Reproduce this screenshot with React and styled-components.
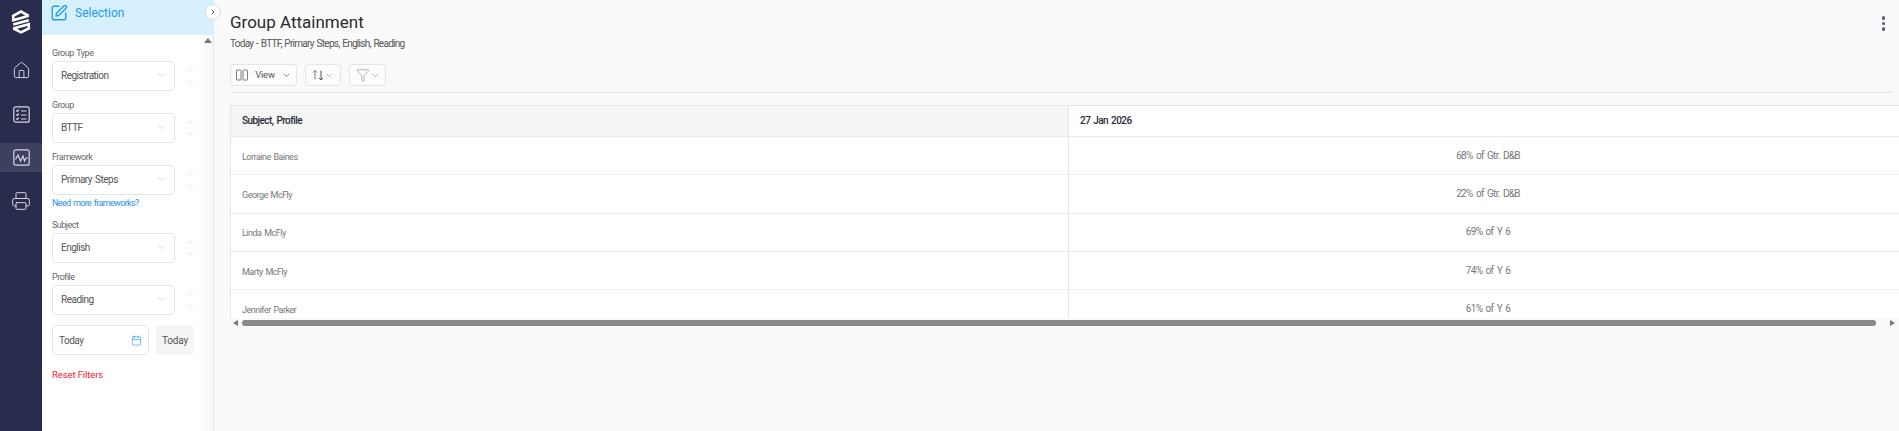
import React from 'react'
import styled, { createGlobalStyle } from 'styled-components'
import { House, Printer, SquarePen, Calendar, ChevronDown, ChevronUp, ChevronRight, Funnel } from 'lucide-react'

const Global = createGlobalStyle`
  html, body { margin: 0; height: 100%; overflow: hidden; background: #fafafa; }
  body { font-family: Roboto, "Liberation Sans", sans-serif; }
  * { box-sizing: border-box; }
`

const Page = styled.div`
  display: flex;
  width: 1899px;
  height: 431px;
  overflow: hidden;
`

const Rail = styled.nav`
  width: 42px;
  flex: none;
  background: #2a2c4e;
  color: #d5d6de;
  display: flex;
  flex-direction: column;
`

const LogoBox = styled.div`
  height: 56px;
  display: flex;
  justify-content: center;
  padding-top: 10px;
  color: #fff;
`

const NavList = styled.div`
  display: flex;
  flex-direction: column;
  gap: 14.5px;
`

const NavItem = styled.div`
  height: 29px;
  display: flex;
  align-items: center;
  justify-content: center;
  background: ${p => (p.$active ? '#3e4060' : 'transparent')};
`

const Panel = styled.aside`
  position: relative;
  width: 172px;
  flex: none;
  background: #fff;
  border-right: 1px solid #e6e6e6;
  display: flex;
  flex-direction: column;
`

const PanelHead = styled.div`
  height: 35px;
  background: #d6f0ff;
  border-bottom: 1px solid #e4eef4;
  color: #1f9cf0;
  font-size: 12px;
  display: flex;
  align-items: center;
  gap: 7px;
  padding: 0 0 8px 8px;
  margin-right: -1px;
`

const Toggle = styled.div`
  position: absolute;
  top: 4px;
  right: -8px;
  width: 16px;
  height: 16px;
  border-radius: 50%;
  background: #fff;
  border: 1px solid #d9dce2;
  display: flex;
  align-items: center;
  justify-content: center;
  color: #555;
  z-index: 2;
`

const PanelBody = styled.div`
  flex: 1;
  display: flex;
  min-height: 0;
`

const Form = styled.div`
  flex: 1;
  padding: 11px 0 0 10px;
  display: flex;
  flex-direction: column;
`

const ScrollTrack = styled.div`
  width: 10px;
  background: #fafafa;
  display: flex;
  justify-content: center;
  padding-top: 3px;
`

const ArrowUp = styled.div`
  width: 0;
  height: 0;
  border-left: 4px solid transparent;
  border-right: 4px solid transparent;
  border-bottom: 5px solid #777;
`

const Field = styled.div`
  margin-bottom: 7px;
`

const Label = styled.div`
  font-size: 9px;
  letter-spacing: -0.5px;
  word-spacing: 1px;
  line-height: 14px;
  margin-bottom: 1px;
  color: #666;
`

const SelectRow = styled.div`
  display: flex;
  align-items: center;
  gap: 6px;
`

const SelectBox = styled.div`
  width: 123px;
  height: 30px;
  border: 1px solid #e5e5e8;
  border-radius: 4px;
  padding: 0 7px 2px 8px;
  display: flex;
  align-items: center;
  justify-content: space-between;
  font-size: 10px;
  letter-spacing: -0.5px;
  word-spacing: 1px;
  color: #555;
  background: #fff;
`

const Stepper = styled.div`
  width: 14px;
  color: #d3d6df;
  display: flex;
  flex-direction: column;
  align-items: center;
  margin-left: 1px;

  svg + svg {
    margin-top: -2px;
  }
`

const HelpLink = styled.div`
  font-size: 9px;
  letter-spacing: -0.65px;
  word-spacing: 1px;
  line-height: 15px;
  color: #1f8fe8;
  margin-top: -6px;
  margin-bottom: 7px;
`

const DateRow = styled.div`
  display: flex;
  gap: 7px;
  margin-top: 3px;
`

const DateBox = styled(SelectBox)`
  width: 97px;
  padding: 0 6px 0 6px;
  color: #555;
`

const TodayButton = styled.div`
  width: 38px;
  height: 30px;
  border-radius: 3px;
  background: #f4f5f7;
  color: #555;
  font-size: 10px;
  letter-spacing: -0.2px;
  display: flex;
  align-items: center;
  justify-content: center;
`

const ResetLink = styled.div`
  margin-top: 13px;
  font-size: 9.5px;
  letter-spacing: -0.1px;
  line-height: 14px;
  color: #f5222d;
`

const Main = styled.main`
  flex: 1;
  min-width: 0;
  padding: 0 6px 0 16px;
  display: flex;
  flex-direction: column;
`

const TitleRow = styled.div`
  height: 37px;
  padding-top: 12px;
  display: flex;
  justify-content: space-between;
`

const Title = styled.h1`
  margin: 0;
  font-size: 17px;
  line-height: 21px;
  font-weight: 400;
  color: #2b2b2b;
`

const Dots = styled.div`
  display: flex;
  flex-direction: column;
  gap: 2px;
  padding: 4px 8px 0 0;
`

const Dot = styled.span`
  width: 3.5px;
  height: 3.5px;
  border-radius: 50%;
  background: #565b7c;
`

const Sub = styled.div`
  font-size: 10px;
  letter-spacing: -0.73px;
  word-spacing: 1px;
  line-height: 14px;
  color: #555;
`

const Toolbar = styled.div`
  display: flex;
  gap: 8px;
  margin-top: 13px;
  padding-bottom: 6px;
  border-bottom: 1px solid #e5e5e5;
  height: 29px;
`

const ToolButton = styled.div`
  height: 22px;
  width: ${p => p.$w}px;
  border: 1px solid #e5e5e8;
  border-radius: 3px;
  background: #fcfcfc;
  color: #7d7d7d;
  font-size: 9.5px;
  letter-spacing: -0.2px;
  display: flex;
  align-items: center;
  justify-content: center;
  gap: ${p => p.$gap || 1}px;
`

const ViewText = styled.span`
  color: #555;
  margin: 0 6px 2px 6px;
`

const TableClip = styled.div`
  margin: 12px -6px 0 0;
  height: 213px;
  overflow: hidden;
`

const Table = styled.table`
  width: 1677px;
  table-layout: fixed;
  border-collapse: separate;
  border-spacing: 0;
  background: #fff;
`

const HeadCell = styled.th`
  height: 32px;
  padding: 0 0 2px 11px;
  text-align: left;
  font-size: 10px;
  letter-spacing: -0.55px;
  word-spacing: 1px;
  font-weight: 500;
  color: #2b2b33;
  background: ${p => (p.$first ? '#f4f5f7' : '#fff')};
  border-top: 1px solid #e6e6e6;
  border-left: 1px solid #e6e6e6;
  border-bottom: 1px solid #e9e9e9;
`

const NameCell = styled.td`
  height: 38.3px;
  padding: 2px 0 0 11px;
  font-size: 9px;
  letter-spacing: -0.5px;
  word-spacing: 1px;
  color: #777;
  border-left: 1px solid #e6e6e6;
  border-bottom: 1px solid #eeeeee;
`

const ValueCell = styled.td`
  height: 38.3px;
  padding: 0 0 1px 0;
  text-align: center;
  font-size: 10px;
  letter-spacing: -0.7px;
  word-spacing: 1.5px;
  color: #777;
  border-left: 1px solid #e6e6e6;
  border-bottom: 1px solid #eeeeee;
`

const ScrollBar = styled.div`
  margin: 2px -6px 0 0;
  height: 6px;
  display: flex;
  align-items: center;
`

const ArrowLeft = styled.div`
  width: 0;
  height: 0;
  margin: 0 4px 0 3px;
  border-top: 3.5px solid transparent;
  border-bottom: 3.5px solid transparent;
  border-right: 5px solid #777;
`

const ArrowRight = styled.div`
  width: 0;
  height: 0;
  margin-left: 14px;
  border-top: 3.5px solid transparent;
  border-bottom: 3.5px solid transparent;
  border-left: 5px solid #777;
`

const Thumb = styled.div`
  width: 1634px;
  height: 6px;
  border-radius: 3px;
  background: #8a8a8a;
`

const Logo = () => (
  <svg width="20" height="24" viewBox="0 0 20 24" fill="none" stroke="currentColor" strokeWidth="2.6">
    <path d="M17.800 5.800 10 1.600 2.200 5.800v4.400l15.600-4.400" />
    <path d="M2.200 14.600 17.800 10.300" />
    <path d="M2.200 18.400 10 22.400l7.800-4v-4.200L2.200 18.400" />
  </svg>
)

const ChecklistIcon = () => (
  <svg width="17" height="17" viewBox="0 0 17 17" fill="none" stroke="currentColor" strokeWidth="1.2">
    <rect x="0.8" y="0.8" width="15.4" height="15.400" rx="2" />
    <path d="M3.300 4.500l1 1 1.700-1.800M3.300 8.500l1 1 1.700-1.800M3.300 12.500l1 1 1.700-1.800M8 5h5.500M8 9h5.500M8 13h5.500" />
  </svg>
)

const PulseIcon = () => (
  <svg width="17" height="17" viewBox="0 0 17 17" fill="none" stroke="currentColor" strokeWidth="1.2">
    <rect x="0.8" y="0.8" width="15.4" height="15.400" rx="2" />
    <path d="M2.500 10.500 5 6l2.500 6L10 7l1.500 5 1.500-3h2" />
  </svg>
)

const ColumnsIcon = () => (
  <svg width="12" height="12" viewBox="0 0 12 12" fill="none" stroke="currentColor" strokeWidth="1">
    <rect x="0.500" y="1" width="4.500" height="10" rx="0.500" />
    <rect x="7" y="1" width="4.500" height="10" rx="0.500" />
  </svg>
)

const SortIcon = () => (
  <svg width="12" height="12" viewBox="0 0 12 12" fill="none" stroke="currentColor" strokeWidth="1">
    <path d="M3 10.500V1.500M1 3.500l2-2 2 2" />
    <path d="M9 1.500v9.500M7 9l2 2 2-2" stroke="#555" />
  </svg>
)

const Select = ({ value }) => (
  <SelectRow>
    <SelectBox>
      {value}
      <ChevronDown size={12} color="#c6cad4" strokeWidth={1.500} />
    </SelectBox>
    <Stepper>
      <ChevronUp size={13} strokeWidth={1.200} />
      <ChevronDown size={13} strokeWidth={1.200} />
    </Stepper>
  </SelectRow>
)

const rows = [
  ['Lorraine Baines', '68% of Gtr. D&B'],
  ['George McFly', '22% of Gtr. D&B'],
  ['Linda McFly', '69% of Y 6'],
  ['Marty McFly', '74% of Y 6'],
  ['Jennifer Parker', '61% of Y 6'],
]

const App = () => (
  <Page>
    <Global />
    <Rail>
      <LogoBox><Logo /></LogoBox>
      <NavList>
        <NavItem><House size={19} strokeWidth={1.200} /></NavItem>
        <NavItem><ChecklistIcon /></NavItem>
        <NavItem $active><PulseIcon /></NavItem>
        <NavItem><Printer size={20} strokeWidth={1.200} /></NavItem>
      </NavList>
    </Rail>

    <Panel>
      <PanelHead><SquarePen size={18} strokeWidth={1.800} />Selection</PanelHead>
      <Toggle><ChevronRight size={8} strokeWidth={3} /></Toggle>
      <PanelBody>
        <Form>
          <Field><Label>Group Type</Label><Select value="Registration" /></Field>
          <Field><Label>Group</Label><Select value="BTTF" /></Field>
          <Field><Label>Framework</Label><Select value="Primary Steps" /></Field>
          <HelpLink>Need more frameworks?</HelpLink>
          <Field><Label>Subject</Label><Select value="English" /></Field>
          <Field><Label>Profile</Label><Select value="Reading" /></Field>
          <DateRow>
            <DateBox>Today<Calendar size={11} color="#2f9ff0" strokeWidth={1.500} /></DateBox>
            <TodayButton>Today</TodayButton>
          </DateRow>
          <ResetLink>Reset Filters</ResetLink>
        </Form>
        <ScrollTrack><ArrowUp /></ScrollTrack>
      </PanelBody>
    </Panel>

    <Main>
      <TitleRow>
        <Title>Group Attainment</Title>
        <Dots><Dot /><Dot /><Dot /></Dots>
      </TitleRow>
      <Sub>Today - BTTF, Primary Steps, English, Reading</Sub>
      <Toolbar>
        <ToolButton $w={67} $gap={0}>
          <ColumnsIcon />
          <ViewText>View</ViewText>
          <ChevronDown size={9} color="#555" strokeWidth={2} />
        </ToolButton>
        <ToolButton $w={36}>
          <SortIcon />
          <ChevronDown size={9} strokeWidth={1.500} />
        </ToolButton>
        <ToolButton $w={37}>
          <Funnel size={14} strokeWidth={1} />
          <ChevronDown size={9} strokeWidth={1.500} />
        </ToolButton>
      </Toolbar>
      <TableClip>
        <Table>
          <colgroup>
            <col style={{ width: 838 }} />
            <col />
          </colgroup>
          <thead>
            <tr>
              <HeadCell $first>Subject, Profile</HeadCell>
              <HeadCell>27 Jan 2026</HeadCell>
            </tr>
          </thead>
          <tbody>
            {rows.map(([name, value]) => (
              <tr key={name}>
                <NameCell>{name}</NameCell>
                <ValueCell>{value}</ValueCell>
              </tr>
            ))}
          </tbody>
        </Table>
      </TableClip>
      <ScrollBar>
        <ArrowLeft />
        <Thumb />
        <ArrowRight />
      </ScrollBar>
    </Main>
  </Page>
)

export default App
